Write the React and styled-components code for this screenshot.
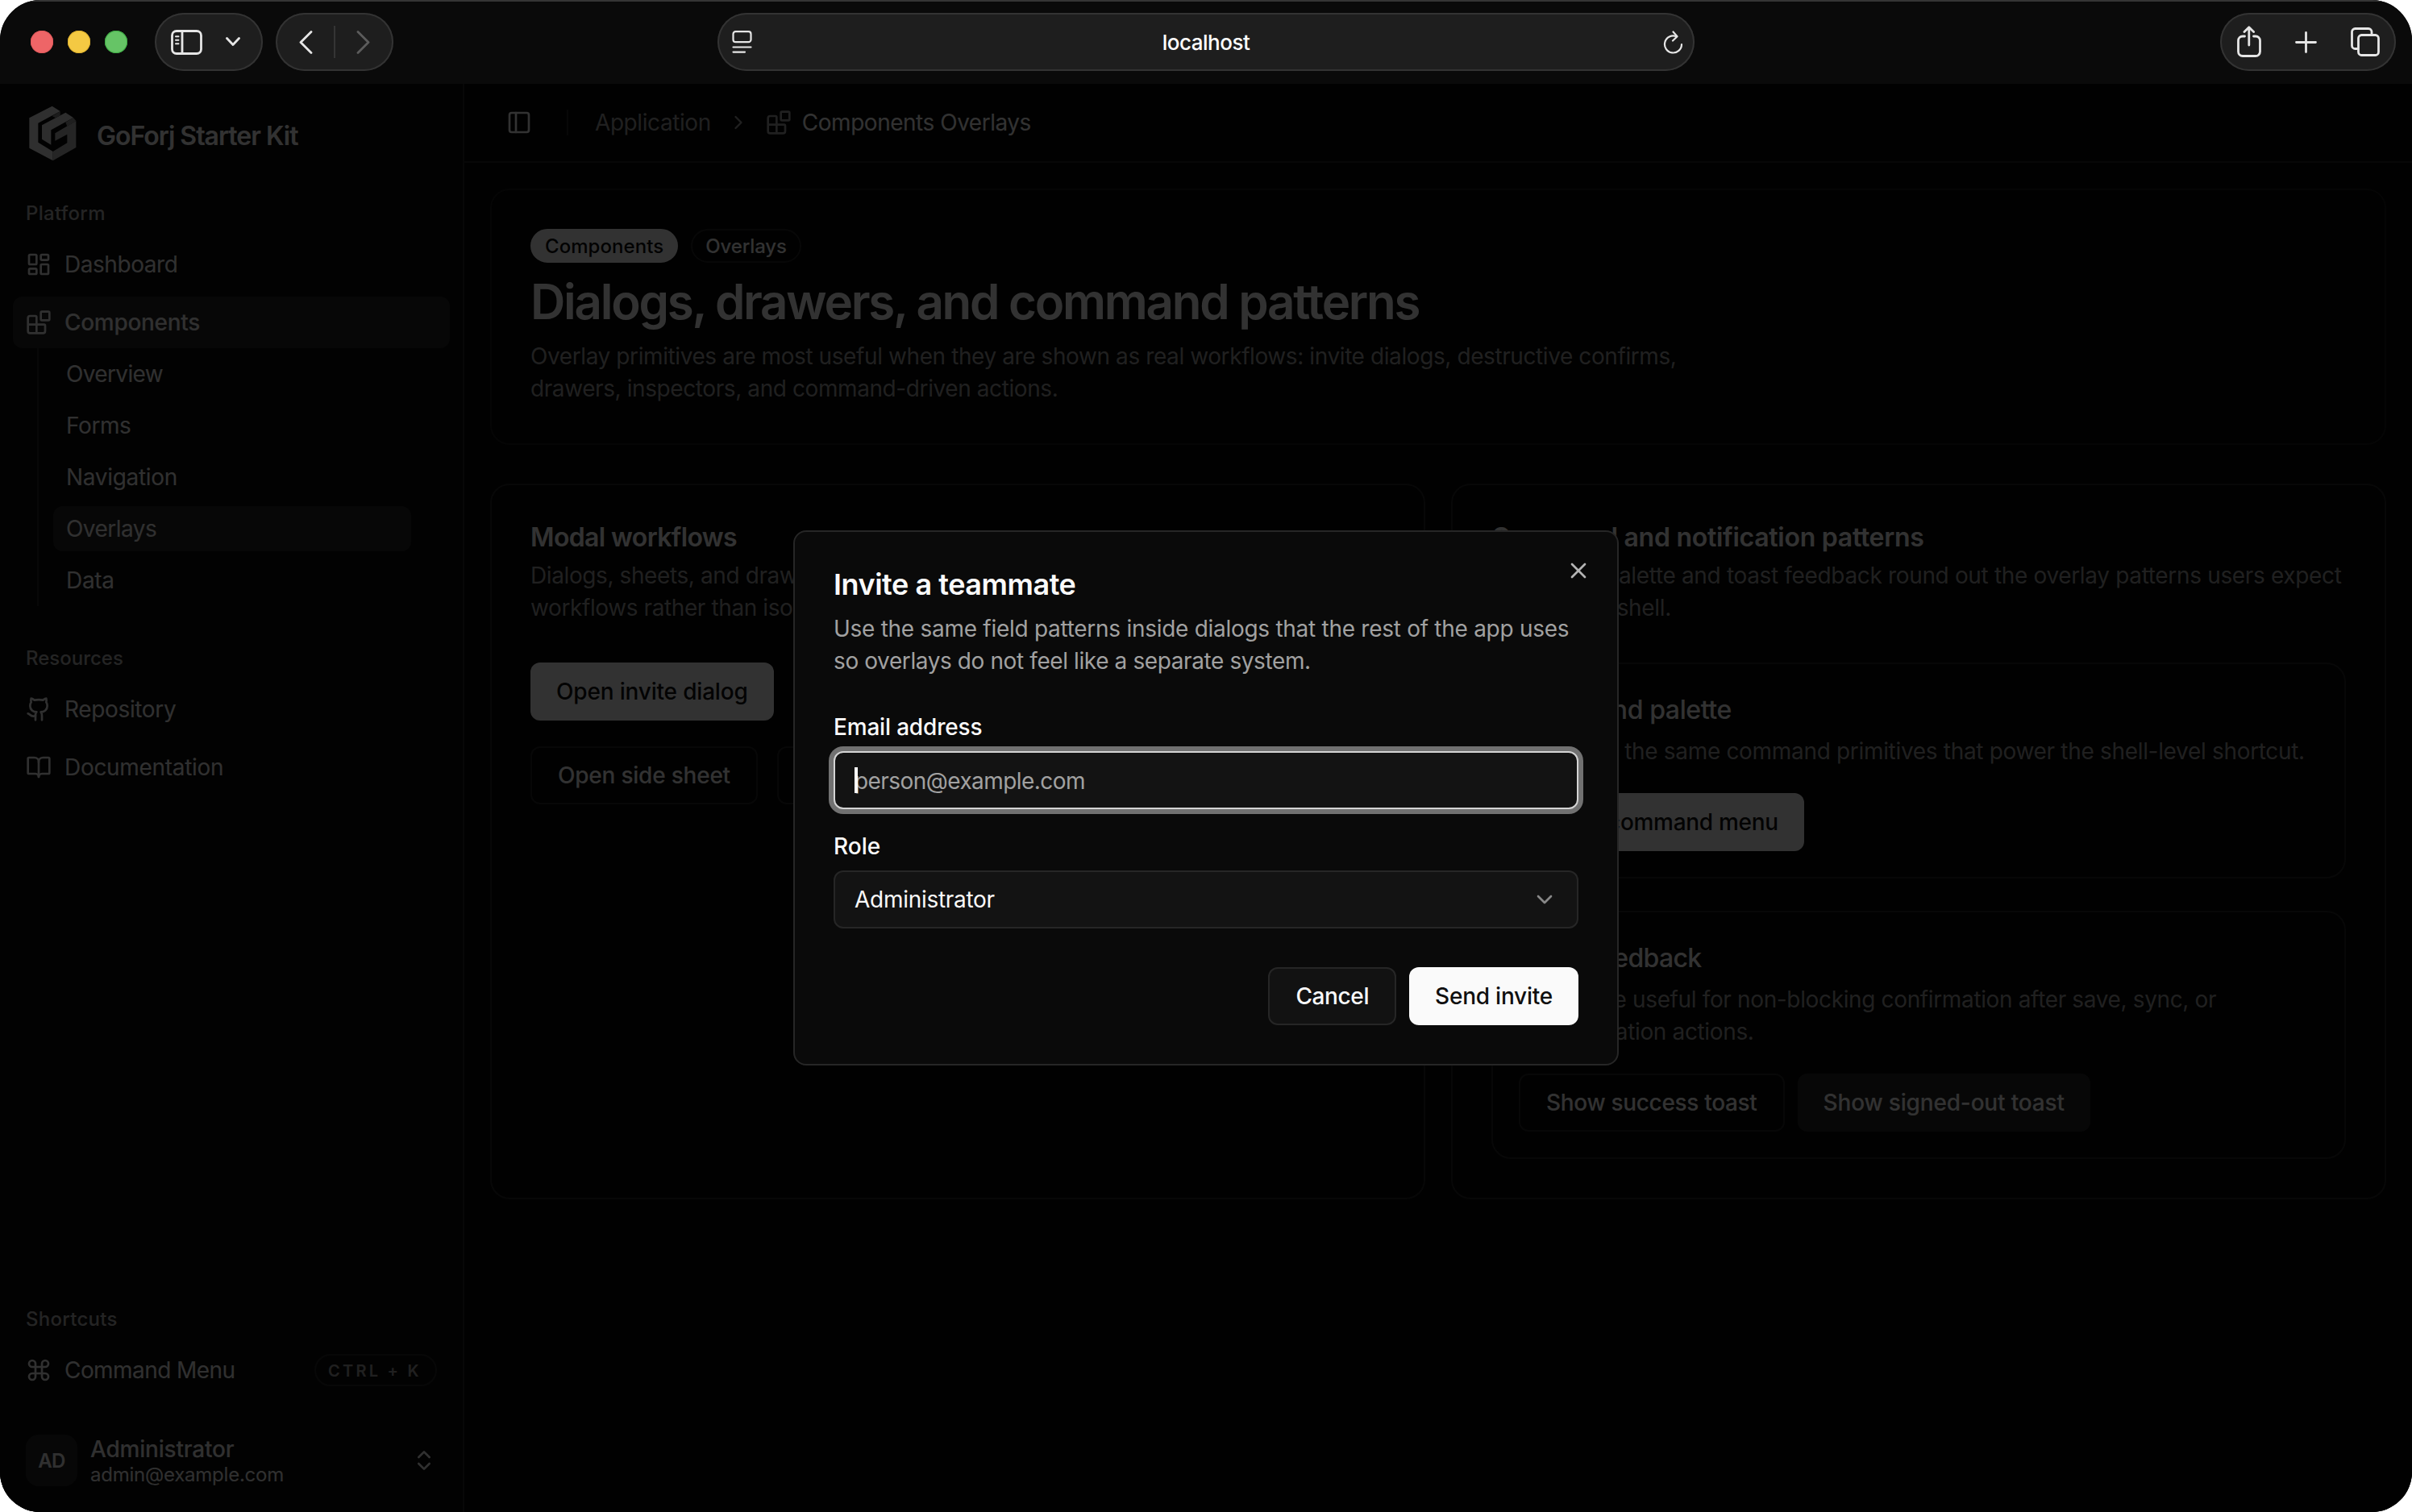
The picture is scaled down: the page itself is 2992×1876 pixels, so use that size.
import React from "react";
import styled, { createGlobalStyle, css } from "styled-components";
import {
  LayoutDashboard,
  Blocks,
  Github,
  BookOpen,
  Command,
  ChevronsUpDown,
  ChevronRight,
  ChevronDown,
  PanelLeft,
  X,
} from "lucide-react";

const color = {
  bg: "#050505",
  sidebar: "#0c0c0c",
  card: "#050505",
  fg: "#fafafa",
  muted: "#a1a1a1",
  border: "#262626",
  faint: "#1a1a1a",
  accent: "#262626",
};

const GlobalStyle = createGlobalStyle`
  *, *::before, *::after { box-sizing: border-box; }
  body {
    margin: 0;
    background: #fff;
    font-family: Inter, "Liberation Sans", sans-serif;
    -webkit-font-smoothing: antialiased;
  }
`;

/* ---------- browser window ---------- */

const Window = styled.div`
  display: flex;
  flex-direction: column;
  width: 2992px;
  height: 1876px;
  overflow: hidden;
  border-radius: 50px;
  background: #000;
`;

const Toolbar = styled.header`
  display: grid;
  grid-template-columns: 1fr 1212px 1fr;
  align-items: center;
  flex: none;
  height: 104px;
  padding: 0 20px 0 38px;
  background: #0a0a0a;
  box-shadow: inset 0 2px 0 #353535;
`;

const ToolbarSide = styled.div`
  display: flex;
  align-items: center;
  justify-content: ${(p) => (p.$end ? "flex-end" : "flex-start")};
`;

const Lights = styled.div`
  display: flex;
  gap: 18px;
  margin-right: 34px;
`;

const Light = styled.span`
  width: 28px;
  height: 28px;
  border-radius: 50%;
  background: ${(p) => p.$color};
  box-shadow: inset 0 0 0 1px ${(p) => p.$rim};
`;

const Pill = styled.div`
  display: flex;
  align-items: center;
  height: 72px;
  border-radius: 36px;
  background: #1e1e1e;
  box-shadow: inset 0 0 0 2px #333;
  color: #e6e6e6;
`;

const ViewPill = styled(Pill)`
  width: 134px;
  padding-left: 20px;
  gap: 29px;
`;

const HistoryPill = styled(Pill)`
  width: 146px;
  margin-left: 16px;
  padding: 0 29px;
  justify-content: space-between;
`;

const PillDivider = styled.span`
  width: 2px;
  height: 40px;
  background: #353535;
`;

const AddressPill = styled(Pill)`
  margin: 0 9px 0 -9px;
  padding: 0 14px 0 18px;
  justify-content: space-between;
`;

const Address = styled.span`
  margin: 0 2px 0 -2px;
  font-size: 26px;
  font-weight: 500;
  letter-spacing: -0.5px;
  color: #fff;
`;

const ActionsPill = styled(Pill)`
  width: 218px;
  padding: 0 21px;
  gap: 42px;
`;

const Glyph = styled.svg`
  display: block;
  flex: none;
  fill: none;
  stroke: ${(p) => (p.$dim ? "#5c5c5c" : "currentColor")};
  stroke-width: ${(p) => p.$stroke || 2.8}px;
  stroke-linecap: round;
  stroke-linejoin: round;
`;

const FinePath = styled.path`
  stroke-width: 2px;
`;

/* ---------- application shell ---------- */

const Page = styled.div`
  position: relative;
  display: flex;
  flex: 1;
  min-height: 0;
  background: ${color.bg};
  color: ${color.fg};
`;

const Text = styled.span`
  font-size: ${(p) => p.$size || 28}px;
  font-weight: ${(p) => p.$weight || 400};
  letter-spacing: ${(p) => p.$ls || 0}px;
  color: ${(p) => p.$color || "inherit"};
  white-space: nowrap;
`;

const Sidebar = styled.aside`
  display: flex;
  flex-direction: column;
  flex: none;
  width: 576px;
  padding: 0 16px 16px;
  border-right: 2px solid ${color.border};
  background: ${color.sidebar};
`;

const Brand = styled.div`
  display: flex;
  align-items: center;
  height: 128px;
  padding: 0 0 6px 20px;
  gap: 25px;
`;

const BrandName = styled(Text)`
  padding-top: 6px;
`;

const GroupLabel = styled.div`
  display: flex;
  align-items: center;
  height: 64px;
  padding: 0 16px;
  font-size: 24px;
  font-weight: 500;
  letter-spacing: ${(p) => p.$ls || 0}px;
  color: #b4b4b4;
`;

const Group = styled.nav`
  display: flex;
  flex-direction: column;
  gap: 8px;
  margin-bottom: 32px;
`;

const Item = styled.a`
  display: flex;
  align-items: center;
  gap: 16px;
  height: 64px;
  padding: 0 16px;
  border-radius: 12px;
  background: ${(p) => (p.$active ? color.accent : "transparent")};
  color: #f0f0f0;
`;

const SubList = styled.div`
  display: flex;
  flex-direction: column;
  gap: 8px;
  margin: -8px 48px 0 30px;
  padding: 4px 0 4px 18px;
  border-left: 2px solid ${color.border};
`;

const SubItem = styled.a`
  display: flex;
  align-items: center;
  height: 56px;
  padding: 0 16px;
  border-radius: 12px;
  background: ${(p) => (p.$active ? color.accent : "transparent")};
  color: #f0f0f0;
`;

const Bottom = styled.div`
  margin-top: auto;
`;

const Kbd = styled.span`
  display: flex;
  align-items: center;
  width: 152px;
  height: 40px;
  margin-left: auto;
  padding: 1px 0 0 15px;
  border: 2px solid ${color.border};
  border-radius: 20px;
  font-size: 20px;
  font-weight: 600;
  letter-spacing: 3.25px;
  white-space: nowrap;
  color: ${color.muted};
`;

const Account = styled.div`
  display: flex;
  align-items: center;
  height: 96px;
  margin-top: 32px;
  padding: 0 16px;
  color: #f0f0f0;
`;

const Avatar = styled.div`
  display: grid;
  place-items: center;
  width: 64px;
  height: 64px;
  margin-right: 16px;
  border-radius: 16px;
  background: ${color.accent};
  font-size: 24px;
  font-weight: 600;
  letter-spacing: -0.6px;
`;

const AccountText = styled.div`
  display: flex;
  flex-direction: column;
  flex: 1;
  line-height: 36px;

  & > :last-child {
    line-height: 28px;
  }
`;

const Main = styled.main`
  display: flex;
  flex-direction: column;
  flex: 1;
  min-width: 0;
`;

const Crumbs = styled.div`
  display: flex;
  align-items: center;
  flex: none;
  height: 98px;
  padding-left: 52px;
  border-bottom: 2px solid ${color.border};
`;

const CrumbRule = styled.span`
  width: 2px;
  height: 32px;
  margin: 0 33px 0 43px;
  background: ${color.border};
`;

const CrumbTrail = styled.div`
  display: flex;
  align-items: center;
  gap: 20px;
  color: ${color.muted};
`;

const CrumbCurrent = styled.div`
  display: flex;
  align-items: center;
  gap: 13px;
`;

const Content = styled.div`
  display: flex;
  flex-direction: column;
  gap: 48px;
  padding: 32px;
`;

const Card = styled.section`
  padding: 48px;
  border: 2px solid ${(p) => (p.$faint ? color.faint : color.border)};
  border-radius: 24px;
  background: ${color.card};
`;

const Badges = styled.div`
  display: flex;
  gap: 16px;
  margin-bottom: 12px;
`;

const Badge = styled.span`
  display: flex;
  align-items: center;
  height: 42px;
  padding: 0 16px;
  border: 2px solid ${(p) => (p.$solid ? color.fg : color.border)};
  border-radius: 21px;
  background: ${(p) => (p.$solid ? color.fg : "transparent")};
  color: ${(p) => (p.$solid ? "#0a0a0a" : color.fg)};
  font-size: 24px;
  font-weight: 500;
  letter-spacing: ${(p) => p.$ls}px;
`;

const Title = styled.h1`
  margin: 0 0 12px;
  font-size: 60px;
  font-weight: 600;
  line-height: 72px;
  letter-spacing: -2.26px;
`;

const Paragraph = styled.p`
  margin: 0;
  font-size: 28px;
  line-height: 40px;
  letter-spacing: ${(p) => p.$ls}px;
  white-space: nowrap;
  color: ${color.muted};
`;

const Columns = styled.div`
  display: grid;
  grid-template-columns: 1fr 1fr;
  gap: 32px;
`;

const CardTitle = styled.h2`
  margin: 0 0 11px;
  padding-top: 1px;
  font-size: 32px;
  font-weight: 600;
  line-height: 32px;
  letter-spacing: ${(p) => p.$ls}px;
`;

const Panels = styled.div`
  display: flex;
  flex-direction: column;
  gap: 40px;
  margin-top: 48px;
`;

const Panel = styled.div`
  padding: 32px;
  border: 2px solid ${color.border};
  border-radius: 24px;
`;

const PanelTitle = styled.h3`
  margin: 0 0 7px;
  padding-top: 1px;
  font-size: 32px;
  font-weight: 500;
  line-height: 48px;
  letter-spacing: ${(p) => p.$ls}px;
`;

const Buttons = styled.div`
  display: flex;
  gap: ${(p) => p.$gap || 16}px;
  margin-top: ${(p) => p.$top}px;
`;

const buttonKinds = {
  primary: css`
    background: #fafafa;
    color: #0f0f0f;
  `,
  outline: css`
    border: 2px solid ${color.border};
    background: ${(p) => (p.$raised ? "#121212" : "transparent")};
    color: #fafafa;
  `,
  secondary: css`
    background: #262626;
    color: #fafafa;
  `,
};

const Button = styled.button`
  display: flex;
  align-items: center;
  height: 72px;
  min-width: ${(p) => p.$minWidth || 0}px;
  padding: 0 32px;
  border: 0;
  border-radius: 12px;
  font: inherit;
  font-size: 28px;
  font-weight: 500;
  letter-spacing: ${(p) => p.$ls}px;
  white-space: nowrap;
  ${(p) => buttonKinds[p.$kind]}
`;

/* ---------- dialog ---------- */

const Backdrop = styled.div`
  position: absolute;
  inset: 0;
  display: grid;
  place-items: center;
  background: rgba(0, 0, 0, 0.8);
`;

const Dialog = styled.div`
  position: relative;
  width: 1024px;
  padding: 48px;
  border: 2px solid #262626;
  border-radius: 16px;
  background: #0a0a0a;
  color: #fafafa;
`;

const Close = styled.span`
  position: absolute;
  top: 32px;
  right: 32px;
  display: flex;
  color: #b4b4b4;
`;

const DialogTitle = styled.h2`
  margin: -1px 0 17px;
  font-size: 36px;
  font-weight: 600;
  line-height: 36px;
  letter-spacing: -0.46px;
`;

const Fields = styled.div`
  display: flex;
  flex-direction: column;
  gap: 32px;
  margin: 48px 0;
`;

const Label = styled.div`
  margin-bottom: 16px;
  font-size: 28px;
  font-weight: 500;
  line-height: 28px;
  letter-spacing: ${(p) => p.$ls || 0}px;
`;

const Control = styled.div`
  display: flex;
  align-items: center;
  height: 72px;
  padding: 0 24px;
  border: 2px solid ${(p) => (p.$focus ? "#d4d4d4" : "#262626")};
  border-radius: 12px;
  background: #131313;
  box-shadow: ${(p) => (p.$focus ? "0 0 0 6px #717171" : "none")};
`;

const Placeholder = styled(Text)`
  padding-top: 2px;
`;

const Caret = styled.span`
  width: 4px;
  height: 32px;
  margin-right: -4px;
  background: #fff;
  z-index: 1;
`;

const SelectIcon = styled.span`
  display: flex;
  margin-left: auto;
  color: #888;
`;

const DialogActions = styled.div`
  display: flex;
  justify-content: flex-end;
  gap: 16px;
`;

const Logo = () => (
  <svg width="59" height="69" viewBox="36 33 177 207">
    <path fill="#ececec" d="M37 79 122 35 152 54 70 98V170L125 204V238L37 191Z" />
    <path fill="#b8b8b8" d="M125 204 178 172V140L133 164V136L211 90V189L125 238Z" />
    <path fill="#dedede" d="M84 106 172 59 201 78 118 124V179L84 158Z" />
    <path fill="#8c8c8c" d="M122 72 152 54V70L135 79Z" />
    <path fill="#9c9c9c" d="M172 95 201 78 211 90 178 110Z" />
  </svg>
);

const subPages = [
  ["Overview", -0.64],
  ["Forms", -0.4],
  ["Navigation", -0.32],
  ["Overlays", -0.55],
  ["Data", -0.3],
];

export default function App() {
  return (
    <>
      <GlobalStyle />
      <Window>
        <Toolbar>
          <ToolbarSide>
            <Lights>
              <Light $color="#ee6567" $rim="#e25a5c" />
              <Light $color="#f4c943" $rim="#e0b22e" />
              <Light $color="#66c466" $rim="#3fae45" />
            </Lights>
            <ViewPill>
              <Glyph width="39" height="31" viewBox="0 0 39 31">
                <rect x="1.5" y="1.5" width="36" height="28" rx="5.5" />
                <path d="M14 2V29" />
                <FinePath d="M6 8.2H9.5M6 12.8H9.5M6 17.2H9.5" />
              </Glyph>
              <Glyph width="18" height="12" viewBox="0 0 18 12">
                <path d="M1.5 1.5 9 9.5 16.5 1.5" />
              </Glyph>
            </ViewPill>
            <HistoryPill>
              <Glyph width="17" height="29" viewBox="0 0 17 29">
                <path d="M15 1.5 2 14.5 15 27.5" />
              </Glyph>
              <PillDivider />
              <Glyph $dim width="17" height="29" viewBox="0 0 17 29">
                <path d="M2 1.5 15 14.5 2 27.5" />
              </Glyph>
            </HistoryPill>
          </ToolbarSide>
          <AddressPill>
            <Glyph $stroke={2.2} width="25" height="28" viewBox="0 0 25 28">
              <rect x="1.5" y="1.2" width="22" height="13" rx="3" />
              <path d="M1.5 20.5H23.5M1.5 26.6H16" />
            </Glyph>
            <Address>localhost</Address>
            <Glyph $stroke={2.2} width="25" height="29" viewBox="0 0 25 29">
              <path d="M23 17A10.5 10.5 0 1 1 16.5 7.3" />
              <path d="M12.5 1.5 17.5 7.2 12 12.5" />
            </Glyph>
          </AddressPill>
          <ToolbarSide $end>
            <ActionsPill>
              <Glyph width="30" height="40" viewBox="0 0 30 40">
                <path d="M9.5 13H7A5.5 5.5 0 0 0 1.5 18.5V32A5.5 5.5 0 0 0 7 37.5H23A5.5 5.5 0 0 0 28.5 32V18.5A5.5 5.5 0 0 0 23 13H20.5" />
                <path d="M14.8 24V2M9 7.5 14.8 1.8 20.6 7.5" />
              </Glyph>
              <Glyph width="27" height="27" viewBox="0 0 27 27">
                <path d="M13.5 1.5V25.5M1.5 13.5H25.5" />
              </Glyph>
              <Glyph width="36" height="36" viewBox="0 0 36 36">
                <path d="M8 26.5H5.5A4 4 0 0 1 1.5 22.5V5.5A4 4 0 0 1 5.5 1.5H22A4 4 0 0 1 26 5.5V8" />
                <rect x="9.5" y="9.5" width="25" height="25" rx="4" />
              </Glyph>
            </ActionsPill>
          </ToolbarSide>
        </Toolbar>

        <Page>
          <Sidebar>
            <Brand>
              <Logo />
              <BrandName $size={32} $weight={600} $ls={-1}>GoForj Starter Kit</BrandName>
            </Brand>
            <GroupLabel $ls={0.3}>Platform</GroupLabel>
            <Group>
              <Item>
                <LayoutDashboard size={32} />
                <Text $ls={-0.45}>Dashboard</Text>
              </Item>
              <Item $active>
                <Blocks size={32} />
                <Text $weight={500} $ls={-0.3}>Components</Text>
              </Item>
              <SubList>
                {subPages.map(([name, ls]) => (
                  <SubItem key={name} $active={name === "Overlays"}>
                    <Text $ls={ls}>{name}</Text>
                  </SubItem>
                ))}
              </SubList>
            </Group>
            <GroupLabel>Resources</GroupLabel>
            <Group>
              <Item>
                <Github size={32} />
                <Text $ls={-0.35}>Repository</Text>
              </Item>
              <Item>
                <BookOpen size={32} />
                <Text $ls={-0.3}>Documentation</Text>
              </Item>
            </Group>
            <Bottom>
              <GroupLabel $ls={0.27}>Shortcuts</GroupLabel>
              <Item>
                <Command size={32} />
                <Text $ls={-0.56}>Command Menu</Text>
                <Kbd>CTRL + K</Kbd>
              </Item>
              <Account>
                <Avatar>AD</Avatar>
                <AccountText>
                  <Text $weight={500} $ls={-0.2}>Administrator</Text>
                  <Text $size={24} $ls={-0.23}>admin@example.com</Text>
                </AccountText>
                <ChevronsUpDown size={32} />
              </Account>
            </Bottom>
          </Sidebar>

          <Main>
            <Crumbs>
              <PanelLeft size={32} />
              <CrumbRule />
              <CrumbTrail>
                <Text $ls={-0.42}>Application</Text>
                <ChevronRight size={28} />
                <CrumbCurrent>
                  <Blocks size={32} />
                  <Text $ls={-0.48} $color="#fafafa">Components Overlays</Text>
                </CrumbCurrent>
              </CrumbTrail>
            </Crumbs>
            <Content>
              <Card $faint>
                <Badges>
                  <Badge $solid $ls={0.06}>Components</Badge>
                  <Badge $ls={-0.12}>Overlays</Badge>
                </Badges>
                <Title>Dialogs, drawers, and command patterns</Title>
                <Paragraph $ls={-0.409}>
                  Overlay primitives are most useful when they are shown as real workflows: invite dialogs, destructive confirms,
                  <br />
                  drawers, inspectors, and command-driven actions.
                </Paragraph>
              </Card>
              <Columns>
                <Card>
                  <CardTitle $ls={-0.62}>Modal workflows</CardTitle>
                  <Paragraph $ls={-0.4}>
                    Dialogs, sheets, and drawers should feel like real product
                    <br />
                    workflows rather than isolated demos.
                  </Paragraph>
                  <Buttons $top={48}>
                    <Button $kind="primary" $ls={-0.18}>Open invite dialog</Button>
                  </Buttons>
                  <Buttons $top={32} $gap={24}>
                    <Button $kind="outline" $ls={-0.22}>Open side sheet</Button>
                    <Button $kind="outline" $minWidth={230} aria-label="Open drawer" />
                  </Buttons>
                </Card>
                <Card>
                  <CardTitle $ls={-0.27}>Command and notification patterns</CardTitle>
                  <Paragraph $ls={-0.34}>
                    Command palette and toast feedback round out the overlay patterns users expect
                    <br />
                    <Text $ls={-1}>from an app </Text>shell.
                  </Paragraph>
                  <Panels>
                    <Panel>
                      <PanelTitle $ls={-0.4}>Command palette</PanelTitle>
                      <Paragraph $ls={-0.32}>
                        This uses the same command primitives that power the shell-level shortcut.
                      </Paragraph>
                      <Buttons $top={32}>
                        <Button $kind="primary" $ls={-0.3}>Open command menu</Button>
                      </Buttons>
                    </Panel>
                    <Panel>
                      <PanelTitle $ls={-0.7}>Toast feedback</PanelTitle>
                      <Paragraph $ls={-0.36}>
                        Toasts are useful for non-blocking confirmation after save, sync, or
                        <br />
                        authentication actions.
                      </Paragraph>
                      <Buttons $top={32}>
                        <Button $kind="outline" $ls={-0.32}>Show success toast</Button>
                        <Button $kind="secondary" $ls={-0.17}>Show signed-out toast</Button>
                      </Buttons>
                    </Panel>
                  </Panels>
                </Card>
              </Columns>
            </Content>
          </Main>

          <Backdrop>
            <Dialog role="dialog">
              <Close>
                <X size={32} />
              </Close>
              <DialogTitle>Invite a teammate</DialogTitle>
              <Paragraph $ls={-0.28}>
                Use the same field patterns inside dialogs that the rest of the app uses
                <br />
                <Text $ls={-0.4}>so overlays do not feel like a separate system.</Text>
              </Paragraph>
              <Fields>
                <div>
                  <Label $ls={-0.18}>Email address</Label>
                  <Control $focus>
                    <Caret />
                    <Placeholder $ls={-0.56} $color="#a1a1a1">person@example.com</Placeholder>
                  </Control>
                </div>
                <div>
                  <Label>Role</Label>
                  <Control>
                    <Text $ls={-0.28}>Administrator</Text>
                    <SelectIcon>
                      <ChevronDown size={32} />
                    </SelectIcon>
                  </Control>
                </div>
              </Fields>
              <DialogActions>
                <Button $kind="outline" $raised $ls={-0.38}>Cancel</Button>
                <Button $kind="primary" $ls={-0.23}>Send invite</Button>
              </DialogActions>
            </Dialog>
          </Backdrop>
        </Page>
      </Window>
    </>
  );
}
